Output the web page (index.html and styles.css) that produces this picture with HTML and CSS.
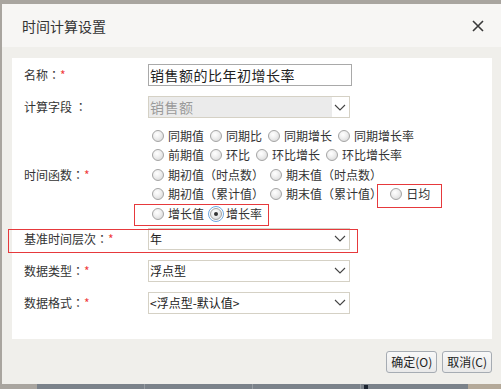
FILE: index.html
```html
<!DOCTYPE html>
<html lang="zh-CN">
<head>
<meta charset="utf-8">
<title>时间计算设置</title>
<link rel="stylesheet" href="styles.css">
</head>
<body>
<div class="screen">
  <div class="dialog">
    <div class="titlebar">
      <span class="title">时间计算设置</span>
      <svg class="close" width="12" height="12" viewBox="0 0 12 12"><path d="M1 1 L11 11 M11 1 L1 11" stroke="#3a3a3a" stroke-width="1.6" fill="none"/></svg>
    </div>
    <div class="body">
      <div class="panel">
        <div class="row">
          <div class="label">名称<span class="p" lang="zh-TW">：</span><span class="req">*</span></div>
          <div class="input name">销售额的比年初增长率</div>
        </div>
        <div class="row">
          <div class="label">计算字段 <span class="p" lang="zh-TW">：</span></div>
          <div class="select disabled"><span class="val">销售额</span><span class="arrow"><svg width="12" height="7" viewBox="0 0 12 7"><polyline points="1,1 6,6 11,1" fill="none" stroke="#444" stroke-width="1.1"/></svg></span></div>
        </div>
        <div class="row group-row">
          <div class="label">时间函数<span class="p" lang="zh-TW">：</span><span class="req">*</span></div>
          <div class="radios">
            <div class="rline">
              <span class="opt"><span class="radio"></span>同期值</span>
              <span class="opt"><span class="radio"></span>同期比</span>
              <span class="opt"><span class="radio"></span>同期增长</span>
              <span class="opt"><span class="radio"></span>同期增长率</span>
            </div>
            <div class="rline">
              <span class="opt"><span class="radio"></span>前期值</span>
              <span class="opt"><span class="radio"></span>环比</span>
              <span class="opt"><span class="radio"></span>环比增长</span>
              <span class="opt"><span class="radio"></span>环比增长率</span>
            </div>
            <div class="rline">
              <span class="opt"><span class="radio"></span>期初值<span class="p" lang="zh-TW">（</span>时点数<span class="p" lang="zh-TW">）</span></span>
              <span class="opt"><span class="radio"></span>期末值<span class="p" lang="zh-TW">（</span>时点数<span class="p" lang="zh-TW">）</span></span>
            </div>
            <div class="rline">
              <span class="opt"><span class="radio"></span>期初值<span class="p" lang="zh-TW">（</span>累计值<span class="p" lang="zh-TW">）</span></span>
              <span class="opt"><span class="radio"></span>期末值<span class="p" lang="zh-TW">（</span>累计值<span class="p" lang="zh-TW">）</span></span>
              <span class="opt wide"><span class="radio"></span>日均</span>
            </div>
            <div class="rline">
              <span class="opt"><span class="radio"></span>增长值</span>
              <span class="opt"><span class="radio checked"></span>增长率</span>
            </div>
          </div>
        </div>
        <div class="row tight">
          <div class="label">基准时间层次<span class="p" lang="zh-TW">：</span><span class="req">*</span></div>
          <div class="select"><span class="val">年</span><span class="arrow"><svg width="12" height="7" viewBox="0 0 12 7"><polyline points="1,1 6,6 11,1" fill="none" stroke="#444" stroke-width="1.1"/></svg></span></div>
        </div>
        <div class="row">
          <div class="label">数据类型<span class="p" lang="zh-TW">：</span><span class="req">*</span></div>
          <div class="select"><span class="val">浮点型</span><span class="arrow"><svg width="12" height="7" viewBox="0 0 12 7"><polyline points="1,1 6,6 11,1" fill="none" stroke="#444" stroke-width="1.1"/></svg></span></div>
        </div>
        <div class="row">
          <div class="label">数据格式<span class="p" lang="zh-TW">：</span><span class="req">*</span></div>
          <div class="select"><span class="val">&lt;浮点型-默认值&gt;</span><span class="arrow"><svg width="12" height="7" viewBox="0 0 12 7"><polyline points="1,1 6,6 11,1" fill="none" stroke="#444" stroke-width="1.1"/></svg></span></div>
        </div>
      </div>
      <div class="footer">
        <button class="btn">确定(O)</button>
        <button class="btn">取消(C)</button>
      </div>
    </div>
  </div>
  <div class="taskbar">
    <span class="tb-left"></span>
    <span class="tb-mid"><span class="seg"></span><span class="seg"></span><span class="seg"></span><span class="seg last"><span class="glyph"></span></span></span>
    <span class="tb-right"></span>
  </div>
  <div class="mark mark-a"></div>
  <div class="mark mark-b"></div>
  <div class="mark mark-c"></div>
</div>
</body>
</html>
```

FILE: styles.css
```css
html, body {
  margin: 0;
  padding: 0;
}
body {
  background: #a9a59f;
  font-family: "Noto Sans CJK SC", "Noto Sans", sans-serif;
  color: #333;
}
.p {
  font-family: "Noto Sans CJK TC", "Noto Sans CJK SC", sans-serif;
}
.screen {
  position: relative;
  width: 501px;
  height: 389px;
  overflow: hidden;
  display: flex;
  flex-direction: column;
}
.dialog {
  margin: 4px 0 0 2px;
  width: 499px;
  height: 380px;
  display: flex;
  flex-direction: column;
  background: #f0efeb;
}
.titlebar {
  height: 43px;
  background: #f7f6f4;
  display: flex;
  align-items: center;
  justify-content: space-between;
  padding: 0 17px 0 20px;
  box-sizing: border-box;
}
.title {
  font-size: 14px;
  color: #333;
  line-height: 1;
  margin-top: 1px;
}
.close {
  margin-top: 1px;
}
.body {
  flex: 1;
  padding: 11px 9px 0 10px;
  display: flex;
  flex-direction: column;
}
.panel {
  background: #fff;
  height: 281px;
  box-sizing: border-box;
  padding: 6px 0 0 12px;
  display: flex;
  flex-direction: column;
  gap: 10px;
}
.row {
  display: flex;
  align-items: center;
}
.row.group-row {
  margin-top: -2px;
}
.row.tight {
  margin-top: -6px;
}
.label {
  width: 124px;
  flex: none;
  font-size: 12px;
  color: #333;
  line-height: 16px;
  white-space: pre;
}
.req {
  color: #f03c3c;
}
.input {
  width: 204px;
  height: 22px;
  box-sizing: border-box;
  border: 1px solid #a9a9a9;
  font-size: 14px;
  line-height: 20px;
  padding-left: 1px;
  color: #222;
  letter-spacing: 0.5px;
  white-space: nowrap;
}
.select {
  width: 202px;
  height: 22px;
  box-sizing: border-box;
  border: 1px solid #d5d1c5;
  display: flex;
  align-items: center;
  font-size: 12px;
  color: #222;
}
.select .val {
  flex: 1;
  padding-left: 1px;
  line-height: 20px;
  height: 20px;
  white-space: nowrap;
}
.select .arrow {
  width: 17px;
  height: 20px;
  display: flex;
  align-items: center;
  justify-content: center;
  padding-right: 2px;
  box-sizing: border-box;
}
.select.disabled .val {
  background: #ebebeb;
  color: #9a9a9a;
  font-size: 14px;
  letter-spacing: 0.5px;
}
.select.disabled .arrow {
  background: #fff;
}
.radios {
  display: flex;
  flex-direction: column;
  font-size: 12px;
  color: #333;
}
.rline {
  height: 19.5px;
  display: flex;
  align-items: center;
  white-space: nowrap;
}
.opt {
  display: inline-flex;
  align-items: center;
  margin-left: 4px;
  margin-right: 2px;
  line-height: 16px;
}
.opt.wide {
  margin-left: 6px;
}
.radio {
  width: 12px;
  height: 12px;
  box-sizing: border-box;
  border-radius: 50%;
  border: 1px solid #a4a4a4;
  background: radial-gradient(circle at 40% 35%, #ffffff 0%, #f0f0f0 40%, #d2d2d2 100%);
  margin-right: 4px;
  flex: none;
  position: relative;
}
.radio.checked {
  outline: 1px solid #6fa8e0;
  outline-offset: 1px;
}
.radio.checked::after {
  content: "";
  position: absolute;
  left: 3px;
  top: 3px;
  width: 4px;
  height: 4px;
  border-radius: 50%;
  background: #333;
}
.footer {
  display: flex;
  justify-content: flex-end;
  gap: 5px;
  margin-top: 12px;
}
.btn {
  height: 22px;
  padding: 0 4px;
  border: 1px solid #a6acb3;
  border-radius: 3px;
  background: linear-gradient(#f8f8f8, #e9e9e9);
  font-family: "Noto Sans CJK SC", "Noto Sans", sans-serif;
  font-size: 12px;
  color: #222;
  line-height: 20px;
  margin: 0;
}
.taskbar {
  flex: 1;
  display: flex;
}
.tb-left {
  width: 37px;
  background: #a9a59f;
}
.tb-mid {
  width: 431px;
  background: #7b828a;
  display: flex;
}
.seg {
  width: 107px;
  border-right: 1px solid #979da3;
}
.seg.last {
  border-right: none;
  position: relative;
}
.glyph {
  position: absolute;
  left: 3px;
  top: 1px;
  width: 4px;
  height: 5px;
  background: #1c2430;
}
.tb-right {
  flex: 1;
  background: #b4a999;
}
.mark {
  position: absolute;
  border: 1px solid #e6393c;
  box-sizing: border-box;
}
.mark-a {
  left: 134px;
  top: 204px;
  width: 135px;
  height: 22px;
}
.mark-b {
  left: 377px;
  top: 184px;
  width: 65px;
  height: 24px;
}
.mark-c {
  left: 8px;
  top: 229px;
  width: 350px;
  height: 24px;
}
```
